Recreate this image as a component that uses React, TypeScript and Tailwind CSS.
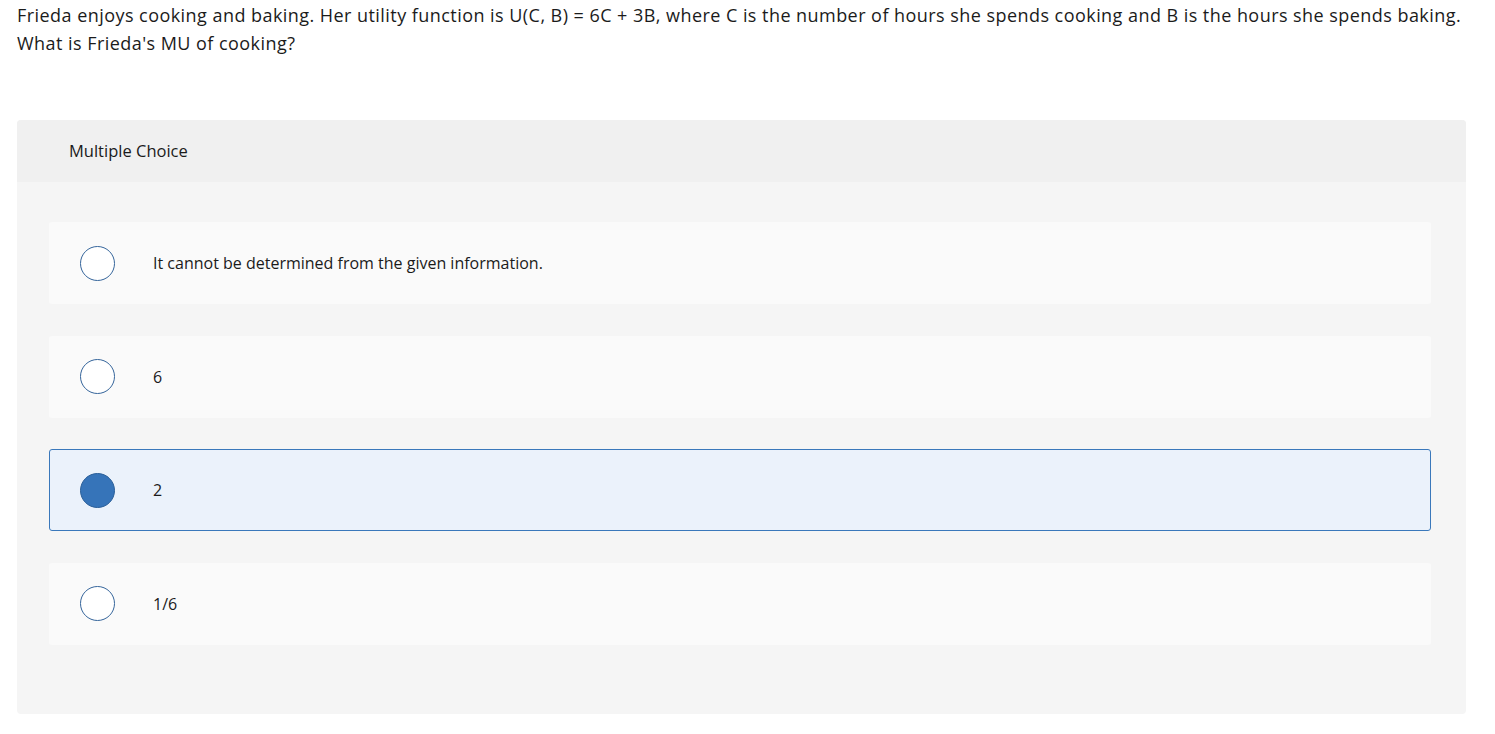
const options = [
  { label: "It cannot be determined from the given information.", selected: false },
  { label: "6", selected: false },
  { label: "2", selected: true },
  { label: "1/6", selected: false },
];

function Radio({ checked }: { checked: boolean }) {
  return (
    <span
      className={
        checked
          ? "h-[35px] w-[35px] flex-shrink-0 rounded-full border border-[#2a5f99] bg-[#3674b9]"
          : "h-[35px] w-[35px] flex-shrink-0 rounded-full border-[1.5px] border-[#35659b] bg-white"
      }
    />
  );
}

export default function App() {
  return (
    <div className="min-h-screen bg-white font-['Open_Sans',sans-serif] text-[#1b1b1b]">
      {/* Question */}
      <div className="px-[17px] pt-[1px] text-[18px] leading-[28px] tracking-[0.45px]">
        Frieda enjoys cooking and baking. Her utility function is U(C, B) = 6C + 3B, where C is the number of hours she spends cooking and B is the hours she spends baking.
        <br />
        What is Frieda's MU of cooking?
      </div>

      {/* Answer panel */}
      <div className="ml-[17px] mt-[63px] w-[1449px] overflow-hidden rounded-[4px] bg-[#f5f5f5]">
        <div className="flex h-[62px] items-center bg-[#f0f0f0] pl-[52px] text-[16.5px]">
          Multiple Choice
        </div>

        <div className="flex flex-col gap-[31.67px] px-[32px] pb-[69px] pt-[40px]">
          {options.map((o) => (
            <div
              key={o.label}
              className={
                o.selected
                  ? "flex h-[82px] w-[1382px] items-center gap-[38px] rounded-[3px] border border-[#3a78bb] bg-[#ebf2fb] pl-[30px]"
                  : "flex h-[82px] w-[1382px] items-center gap-[38px] rounded-[3px] border border-transparent bg-[#fafafa] pl-[30px]"
              }
            >
              <Radio checked={o.selected} />
              <span className="text-[16px]">{o.label}</span>
            </div>
          ))}
        </div>
      </div>
    </div>
  );
}
